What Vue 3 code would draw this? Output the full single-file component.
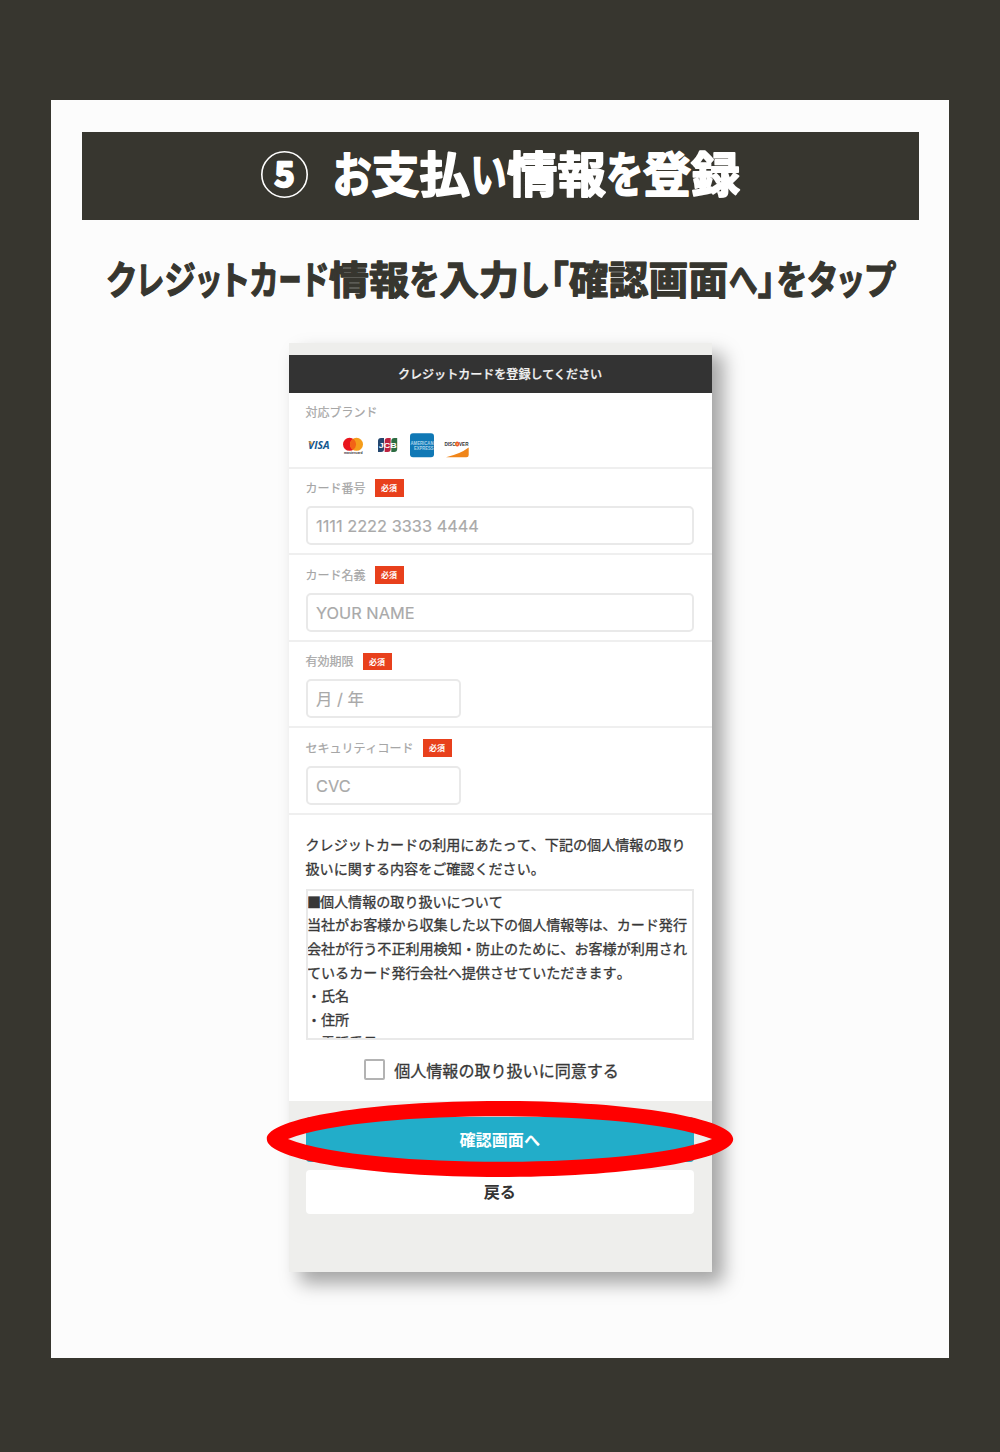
<script setup>
const fields = [
  { label: 'カード番号', hint: '1111 2222 3333 4444', kind: 'number' },
  { label: 'カード名義', hint: 'YOUR NAME', kind: 'name' },
  { label: '有効期限', hint: '月 / 年', kind: 'short date' },
  { label: 'セキュリティコード', hint: 'CVC', kind: 'short cvc' },
]

// Splits a headline into cells: each glyph is fitted between its own edge and the next one.
// Kana keep a small gap on both sides, kanji bring their own side bearings.
function fit(text, edges) {
  return [...text].map((c, i) => {
    const gap = /[\u3000-\u30ff]/.test(c) ? 0.7 : 0
    return { c, x: edges[i] + gap, w: edges[i + 1] - edges[i] - gap * 2 }
  })
}
const title = fit('お支払い情報を登録', [332, 371, 419, 469.5, 506.5, 557, 605.5, 642.5, 690.5, 739.5])
const lead = fit('クレジットカード情報を入力し「確認画面へ」をタップ', [
  105.5, 135.5, 163.5, 195.5, 221, 249, 278, 301.3, 328.5, 368.5, 408.7, 439, 478.5, 518.5, 548.5, 568.5, 607.8, 648,
  687.8, 727.8, 757, 775.5, 806.5, 837, 863.5, 895,
])
</script>

<template>
  <div class="page">
    <main class="sheet">
      <h1 class="bar">
        <svg class="line" width="837" height="88" viewBox="81.5 132 837 88">
          <circle cx="284" cy="174.5" r="22.7" fill="none" stroke="#fff" stroke-width="1.6" />
          <text class="five" x="284" y="187" text-anchor="middle">5</text>
          <text v-for="g in title" :key="g.x" class="big" :x="g.x" y="192.3" :textLength="g.w" lengthAdjust="spacingAndGlyphs">{{ g.c }}</text>
        </svg>
      </h1>
      <h2 class="lead">
        <svg class="line" width="837" height="60" viewBox="81.5 250 837 60">
          <text v-for="g in lead" :key="g.x" class="mid" :x="g.x" y="294" :textLength="g.w" lengthAdjust="spacingAndGlyphs">{{ g.c }}</text>
        </svg>
      </h2>

      <section class="phone">
        <header class="head">クレジットカードを登録してください</header>
        <div class="brands">
          <div class="label">対応ブランド</div>
          <svg class="logos" width="164" height="26" viewBox="306 432 164 26">
            <text x="308" y="449.3" class="visa" textLength="21.5" lengthAdjust="spacingAndGlyphs">VISA</text>
            <path d="M308.2 441.6h3l1 3.8z" fill="#e89b2b" />
            <circle cx="349.5" cy="444.3" r="6.5" fill="#e9151d" />
            <circle cx="356.5" cy="444.3" r="6.5" fill="#f59d1a" />
            <path d="M353 438.8a6.5 6.5 0 0 1 0 11a6.5 6.5 0 0 1 0-11z" fill="#f26316" />
            <text x="344" y="454" class="mc" textLength="18.5" lengthAdjust="spacingAndGlyphs">mastercard</text>
            <path d="M378 452v-11q0-3 3-3h3v11q0 3-3 3z" fill="#24476f" />
            <path d="M384.7 452v-11q0-3 3-3h3v11q0 3-3 3z" fill="#bd2340" />
            <path d="M391.3 452v-11q0-3 3-3h2.9v11q0 3-3 3z" fill="#2d6c42" />
            <text x="378.8" y="447.7" class="jcb" textLength="18" lengthAdjust="spacingAndGlyphs">JCB</text>
            <rect x="410" y="433.3" width="24" height="24" rx="3" fill="#1078b5" />
            <text x="410.5" y="445" class="amex" textLength="23" lengthAdjust="spacingAndGlyphs">AMERICAN</text>
            <text x="414" y="450.3" class="amex" textLength="19.5" lengthAdjust="spacingAndGlyphs">EXPRESS</text>
            <text x="444.5" y="446.2" class="disc" textLength="24" lengthAdjust="spacingAndGlyphs">DISC<tspan fill="#ef5a20" stroke="#ef5a20">O</tspan>VER</text>
            <path d="M446 457.2q14-3 22.7-9.6v7.3q0 2.3-2.3 2.3z" fill="#f08519" />
          </svg>
        </div>
        <div v-for="f in fields" :key="f.label" class="field">
          <div class="label"><span>{{ f.label }}</span><b class="need">必須</b></div>
          <div class="input" :class="f.kind"><span>{{ f.hint }}</span></div>
        </div>
        <div class="terms">
          <p class="note">クレジットカードの利用にあたって、下記の個人情報の取り<br>扱いに関する内容をご確認ください。</p>
          <div class="box">
            <div><i class="sq">■</i>個人情報の取り扱いについて</div>
            <div>当社がお客様から収集した以下の個人情報等は、カード発行</div>
            <div>会社が行う不正利用検知・防止のために、お客様が利用され</div>
            <div>ているカード発行会社へ提供させていただきます。</div>
            <div>・氏名</div>
            <div>・住所</div>
            <div class="cut">・電話番号</div>
          </div>
          <div class="agree"><span class="check"></span>個人情報の取り扱いに同意する</div>
        </div>
        <div class="actions">
          <div class="btn go">確認画面へ</div>
          <div class="btn back">戻る</div>
          <svg class="ring" width="468" height="78" viewBox="0 0 468 78">
            <path fill="#f00" fill-rule="evenodd" d="M.8 39C.8 18 105.200 1 234 1S467.200 18 467.200 39S362.800 77 234 77S.8 60 .8 39zM22 39C64 55.500 155 61.800 234 61.800S404 55.500 446 39C404 22.500 313 16.200 234 16.200S64 22.500 22 39z" />
          </svg>
        </div>
      </section>
    </main>
  </div>
</template>

<style>
body { margin: 0; }
</style>
<style scoped>
.page { box-sizing: border-box; width: 1000px; height: 1452px; padding: 100px 51.4px 94px 51.4px; background: #37362f; font-family: "Noto Sans CJK JP", sans-serif; }
.sheet { box-sizing: border-box; height: 1258px; padding: 32px 30px 0; background: #fcfcfc; display: flex; flex-direction: column; align-items: center; }
h1, h2, p { margin: 0; }
.line { display: block; overflow: visible; }
.line text { font-weight: 700; font-feature-settings: "palt"; stroke-linejoin: round; }
.bar { width: 837px; height: 88px; background: #37362f; }
.line .big { font-size: 48px; fill: #fff; stroke: #fff; stroke-width: 1.8px; }
.line .five { font-size: 34px; fill: #fff; stroke: #fff; stroke-width: 2.4px; }
.lead { height: 60px; margin-top: 30px; }
.line .mid { font-size: 38.5px; fill: #37362f; stroke: #37362f; stroke-width: 1.3px; }

.phone { width: 423px; height: 929px; margin-top: 33px; box-sizing: border-box; padding-top: 12.4px; background: #eeeeec; box-shadow: 11px 11px 18px rgba(0, 0, 0, .36); display: flex; flex-direction: column; }
.head { height: 37.5px; line-height: 38px; background: #333; color: #f2f2f2; font-size: 12.06px; font-weight: 500; text-align: center; -webkit-text-stroke: .25px #f2f2f2; }
.brands { box-sizing: border-box; height: 75.8px; padding: 10px 17px 0; background: #fff; border-bottom: 2px solid #efefef; }
.label { height: 18px; display: flex; align-items: center; gap: 9px; color: #a6a6a6; font-size: 12px; line-height: 18px; font-kerning: none; -webkit-text-stroke: .2px #a6a6a6; }
.logos { display: block; margin-top: 11px; }
.visa { font: italic 700 10.5px "Open Sans", sans-serif; fill: #14588f; }
.mc { font: 700 3.5px "Liberation Sans", sans-serif; fill: #333; }
.jcb { font: 700 7px "Liberation Sans", sans-serif; fill: #fff; }
.amex { font: 700 5.2px "Liberation Sans", sans-serif; fill: #a9d3ea; }
.disc { font: 700 5.6px "Liberation Sans", sans-serif; fill: #333; }
.field { box-sizing: border-box; height: 86.6px; padding: 10.5px 17px 0; background: #fff; border-bottom: 2px solid #efefef; }
.need { width: 29px; height: 17.5px; background: #e8401c; color: #fff; font-size: 8px; line-height: 17px; text-align: center; -webkit-text-stroke: 0; }
.input { box-sizing: border-box; width: 388.5px; height: 39px; margin-top: 9px; padding-left: 8.5px; border: 2px solid #e9e9e9; border-radius: 5px; color: #a9a9a9; font: 16.35px/36px Inter, "Noto Sans CJK JP", sans-serif; -webkit-text-stroke: .15px #a9a9a9; }
.short { width: 155.5px; }
.terms { box-sizing: border-box; height: 286.2px; padding: 17px 17px 0; background: #fff; color: #383838; }
.note { font-size: 14.08px; line-height: 24px; white-space: nowrap; font-kerning: none; -webkit-text-stroke: .3px #383838; }
.box { box-sizing: border-box; width: 388.5px; height: 151px; margin-top: 8.5px; overflow: hidden; border: 2px solid #e9e9e9; font-size: 14.08px; line-height: 23.7px; white-space: nowrap; font-kerning: none; -webkit-text-stroke: .3px #383838; }
.box div:first-child { margin-top: -1px; }
.box div { margin-left: -.6px; }
.box .cut { margin-top: -.8px; }
.sq { display: inline-block; width: 13px; font-style: normal; }
.agree { display: flex; align-items: center; justify-content: center; gap: 9px; height: 24px; margin: 18px 0 0 -17.4px; font-size: 16.06px; -webkit-text-stroke: .3px #383838; }
.check { box-sizing: border-box; width: 21.5px; height: 21.5px; border: 2px solid #b3b3b3; border-radius: 2px; }
.actions { position: relative; padding: 16px 17.5px 0 17px; display: flex; flex-direction: column; gap: 8px; }
.btn { height: 44px; border-radius: 4px; font-size: 16.1px; font-weight: 700; line-height: 42px; text-align: center; }
.go { height: 45px; background: #22adc9; color: #fff; line-height: 44px; }
.back { background: #fff; color: #333; }
.ring { position: absolute; left: -23px; top: -1px; }
</style>
